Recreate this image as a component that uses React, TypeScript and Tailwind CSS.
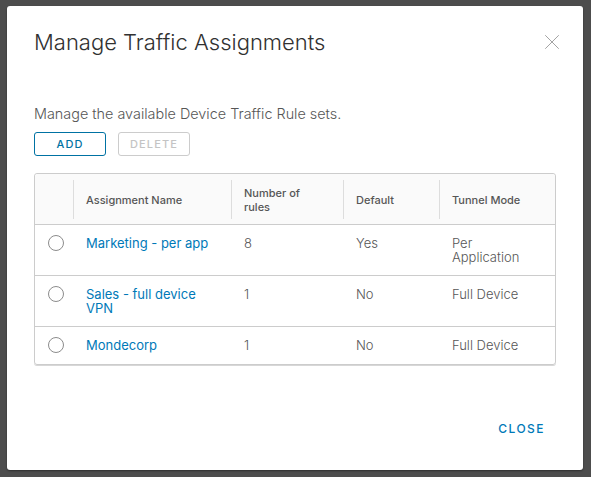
import { X } from 'lucide-react'

type Row = {
  name: string
  rules: string
  isDefault: string
  tunnel: string
}

const ROWS: Row[] = [
  { name: 'Marketing - per app', rules: '8', isDefault: 'Yes', tunnel: 'Per Application' },
  { name: 'Sales - full device VPN', rules: '1', isDefault: 'No', tunnel: 'Full Device' },
  { name: 'Mondecorp', rules: '1', isDefault: 'No', tunnel: 'Full Device' },
]

const COLS = 'grid grid-cols-[38px_158px_112px_96px_1fr]'

function HeaderCell({ label }: { label: string }) {
  return (
    <div className="pt-[6px] pb-[5px]">
      <div className="flex h-[39px] w-full items-center border-l border-[#dddddd] pl-3 pr-4">
        {label}
      </div>
    </div>
  )
}

export default function App() {
  return (
    <div className="min-h-[477px] w-full bg-[#4d4d4d] px-[7px] pt-[6px] font-['Inter',sans-serif]">
      <div className="flex h-[464px] w-[576px] flex-col rounded-[3px] bg-white px-[27px] shadow-[0_1px_2px_rgba(0,0,0,0.4)]">
        <div className="flex items-start justify-between pt-[24px]">
          <h1 className="text-[22px] font-light leading-[24px] text-[#313131]">
            Manage Traffic Assignments
          </h1>
          <button className="mr-[-9px] mt-[-1px] text-[#a0a0a0]">
            <X size={26} strokeWidth={0.9} />
          </button>
        </div>

        <p className="mt-[51px] text-[14.4px] font-light leading-[16px] text-[#565656]">
          Manage the available Device Traffic Rule sets.
        </p>

        <div className="mt-[10px] flex gap-3">
          <button className="h-[24px] w-[72px] rounded-[3px] border border-[#0072a3] text-[11px] font-medium tracking-[0.1em] text-[#0072a3]">
            ADD
          </button>
          <button className="h-[24px] w-[72px] rounded-[3px] border border-[#cccccc] text-[11px] font-medium tracking-[0.1em] text-[#c4c4c4]">
            DELETE
          </button>
        </div>

        <div className="mt-[17px] w-[522px] rounded-[3px] border border-[#cccccc] shadow-[0_1px_0_#d7d7d7]">
          <div className={`${COLS} rounded-t-[3px] bg-[#fafafa] text-[11px] font-medium leading-[14px] text-[#565656]`}>
            <div />
            <HeaderCell label="Assignment Name" />
            <HeaderCell label="Number of rules" />
            <HeaderCell label="Default" />
            <HeaderCell label="Tunnel Mode" />
          </div>
          {ROWS.map((row) => (
            <div
              key={row.name}
              className={`${COLS} border-t border-[#cccccc] text-[13px] font-light leading-[14px] text-[#565656]`}
            >
              <div className="flex justify-center py-[11px] pl-[4px]">
                <span className="mt-[-1px] block h-[16px] w-[16px] rounded-full border border-[#8c8c8c] bg-white" />
              </div>
              <div className="py-[11px] pl-[13px] pr-[16px] font-normal text-[#0079b8]">{row.name}</div>
              <div className="py-[11px] pl-[13px]">{row.rules}</div>
              <div className="py-[11px] pl-[13px]">{row.isDefault}</div>
              <div className="py-[11px] pl-[13px] pr-[30px]">{row.tunnel}</div>
            </div>
          ))}
        </div>

        <div className="mt-auto flex justify-end pb-[32px] pr-[11px]">
          <button className="text-[12px] font-medium tracking-[0.12em] text-[#0079b8]">
            CLOSE
          </button>
        </div>
      </div>
    </div>
  )
}
